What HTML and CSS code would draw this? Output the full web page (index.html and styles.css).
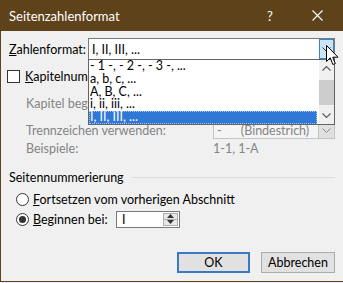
FILE: index.html
```html
<!DOCTYPE html>
<html lang="de">
<head>
    <meta charset="UTF-8">
    <title>Seitenzahlenformat</title>
    <link rel="stylesheet" href="styles.css">
</head>
<body>
    <div class="dialog">
        <div class="titlebar">
            <span class="title">Seitenzahlenformat</span>
            <span class="help">?</span>
            <span class="close">
                <svg width="11" height="11" viewBox="0 0 11 11"><path d="M0.5 0.5 L10.5 10.5 M10.5 0.5 L0.5 10.5" stroke="#fff" stroke-width="1.1" fill="none"/></svg>
            </span>
        </div>

        <div class="content">
            <div class="row row-format">
                <span class="label label-format"><u>Z</u>ahlenformat:</span>
                <div class="combo combo-format">
                    <span class="combo-value">I, II, III, ...</span>
                    <span class="combo-btn pressed">
                        <svg width="9" height="5" viewBox="0 0 9 5"><path d="M0.5 0.5 L4.5 4.5 L8.5 0.5" stroke="#333" fill="none"/></svg>
                    </span>
                </div>
            </div>

            <div class="row row-check">
                <span class="checkbox"></span>
                <span><u>K</u>apitelnummer einbeziehen</span>
            </div>

            <div class="row row-sub disabled">
                <span class="label label-sub">Kapitel beginnt mit Formatvorlage:</span>
                <span>Überschrift 1</span>
            </div>

            <div class="row row-sep disabled">
                <span class="label label-sub">Trennzeichen verwenden:</span>
                <div class="combo combo-sep">
                    <span class="combo-value">-&nbsp;&nbsp;&nbsp;&nbsp;&nbsp;&nbsp;(Bindestrich)</span>
                    <span class="combo-btn">
                        <svg width="9" height="5" viewBox="0 0 9 5"><path d="M0.5 0.5 L4.5 4.5 L8.5 0.5" stroke="#8a8a8a" fill="none"/></svg>
                    </span>
                </div>
            </div>

            <div class="row row-example disabled">
                <span class="label label-sub">Beispiele:</span>
                <span>1-1, 1-A</span>
            </div>

            <div class="row group-head">
                <span>Seitennummerierung</span>
                <span class="group-line"></span>
            </div>

            <div class="row row-radio">
                <span class="radio"></span>
                <span><u>F</u>ortsetzen vom vorherigen Abschnitt</span>
            </div>

            <div class="row row-radio row-start">
                <span class="radio checked"></span>
                <span class="label label-start"><u>B</u>eginnen bei:</span>
                <div class="spin">
                    <span class="spin-value">I</span>
                    <span class="spin-btns">
                        <span class="spin-btn"><svg width="7" height="4" viewBox="0 0 7 4"><path d="M0 4 L3.5 0 L7 4 Z" fill="#333"/></svg></span>
                        <span class="spin-btn"><svg width="7" height="4" viewBox="0 0 7 4"><path d="M0 0 L3.5 4 L7 0 Z" fill="#333"/></svg></span>
                    </span>
                </div>
            </div>

            <div class="buttons">
                <button class="btn btn-default">OK</button>
                <button class="btn">Abbrechen</button>
            </div>
        </div>

        <!-- open list of the Zahlenformat combo -->
        <div class="dropdown">
            <ul class="options">
                <li>- 1 -, - 2 -, - 3 -, ...</li>
                <li>a, b, c, ...</li>
                <li>A, B, C, ...</li>
                <li>i, ii, iii, ...</li>
                <li class="selected">I, II, III, ...</li>
            </ul>
            <div class="scrollbar">
                <span class="scroll-arrow">
                    <svg width="9" height="5" viewBox="0 0 9 5"><path d="M0.5 4.5 L4.5 0.5 L8.5 4.5" stroke="#606060" stroke-width="1.2" fill="none"/></svg>
                </span>
                <span class="scroll-thumb"></span>
                <span class="scroll-arrow">
                    <svg width="9" height="5" viewBox="0 0 9 5"><path d="M0.5 0.5 L4.5 4.5 L8.5 0.5" stroke="#606060" stroke-width="1.2" fill="none"/></svg>
                </span>
            </div>
        </div>

        <svg class="cursor" width="13" height="21" viewBox="0 0 13 21">
            <path d="M0.5 0.5 L0.5 16.5 L4.3 12.8 L6.8 19.5 L9.3 18.5 L6.8 12.2 L12 12.2 Z" fill="#fff" stroke="#000" stroke-width="1"/>
        </svg>
    </div>
</body>
</html>
```

FILE: styles.css
```css
html, body {
    margin: 0;
    padding: 0;
    background-color: #f0f0f0;
}

body {
    font-family: Lato, "Noto Sans", sans-serif;
    font-size: 12.5px;
    color: #000;
}

.dialog {
    position: relative;
    width: 342px;
    height: 281px;
    border-left: 1px solid #5e4219;
    border-bottom: 1px solid #5e4219;
    background-color: #f0f0f0;
}

.titlebar {
    display: flex;
    align-items: center;
    height: 31px;
    padding-left: 8px;
    background-color: #5e4219;
    color: #fff;
    font-size: 13px;
}

.title {
    flex: 1;
}

.help {
    width: 13px;
    margin-right: 32px;
    font-size: 13px;
}

.close {
    display: flex;
    width: 31px;
}

.content {
    padding: 0 8px;
}

.row {
    display: flex;
    align-items: center;
    height: 20px;
    white-space: nowrap;
}

.label {
    flex: none;
}

.disabled {
    color: #848484;
}

.row-format {
    height: 22px;
    margin-top: 7px;
}

.label-format {
    width: 79px;
}

.combo {
    display: flex;
    align-items: stretch;
    box-sizing: border-box;
    background-color: #fff;
    border: 1px solid #7a7a7a;
}

.combo-format {
    width: 247px;
    height: 22px;
}

.combo-value {
    flex: 1;
    display: flex;
    align-items: center;
    padding-left: 3px;
}

.combo-btn {
    display: flex;
    align-items: center;
    justify-content: center;
    width: 15px;
}

.combo-btn.pressed {
    background-color: #cce4f7;
    border: 1px solid #3c83cc;
    width: 13px;
}

.row-check {
    margin-top: 6px;
}

.checkbox {
    width: 13px;
    height: 13px;
    box-sizing: border-box;
    margin-left: -2px;
    margin-right: 5px;
    background-color: #fff;
    border: 1px solid #333;
}

.row-sub {
    margin-top: 7px;
    padding-left: 17px;
    gap: 6px;
}

.label-sub {
    min-width: 187px;
}

.row-sep {
    height: 18px;
    margin-top: 8px;
    padding-left: 17px;
}

.combo-sep {
    width: 123px;
    height: 17px;
    background-color: #f4f4f4;
    border-color: #c4c4c4;
}

.combo-sep .combo-btn {
    background-color: #e0e0e0;
    border-left: 1px solid #c4c4c4;
}

.row-example {
    height: 18px;
    padding-left: 17px;
}

.group-head {
    height: 18px;
    margin-top: 11px;
    gap: 8px;
}

.group-line {
    flex: 1;
    height: 1px;
    background-color: #dcdcdc;
}

.row-radio {
    height: 18px;
    margin-top: 4px;
    padding-left: 7px;
}

.row-start {
    margin-top: 2px;
}

.radio {
    position: relative;
    width: 13px;
    height: 13px;
    box-sizing: border-box;
    margin-right: 4px;
    border: 1px solid #333;
    border-radius: 50%;
    background-color: #fff;
}

.radio.checked::after {
    content: "";
    position: absolute;
    left: 2px;
    top: 2px;
    width: 7px;
    height: 7px;
    border-radius: 50%;
    background-color: #333;
}

.label-start {
    width: 83px;
}

.spin {
    display: flex;
    width: 64px;
    height: 17px;
    box-sizing: border-box;
    background-color: #fff;
    border: 1px solid #7a7a7a;
}

.spin-value {
    flex: 1;
    padding-left: 5px;
    line-height: 15px;
}

.spin-btns {
    display: flex;
    flex-direction: column;
    width: 15px;
    margin: 1px 1px 1px 0;
}

.spin-btn {
    flex: 1;
    display: flex;
    align-items: center;
    justify-content: center;
    background-color: #e8e8e8;
    border: 1px solid #adadad;
}

.spin-btn + .spin-btn {
    border-top: none;
}

.buttons {
    display: flex;
    justify-content: flex-end;
    gap: 11px;
    margin-top: 24px;
}

.btn {
    width: 74px;
    height: 21px;
    padding: 0;
    font-family: inherit;
    font-size: 12.5px;
    color: #000;
    background-color: #e1e1e1;
    border: 1px solid #adadad;
}

.btn-default {
    width: 73px;
    border: 2px solid #3b78c6;
}

/* list that hangs under the open combo */
.dropdown {
    position: absolute;
    left: 87px;
    top: 59px;
    width: 247px;
    height: 66px;
    box-sizing: border-box;
    display: flex;
    background-color: #fff;
    border: 1px solid #646464;
}

.options {
    flex: 1;
    margin: 0;
    padding: 0;
    list-style: none;
}

.options li {
    height: 12.8px;
    line-height: 12.8px;
    padding-left: 1px;
    white-space: nowrap;
}

.options li.selected {
    background-color: #2f78d6;
    color: #fff;
    outline: 1px dotted #a6c6ee;
    outline-offset: -1px;
}

.scrollbar {
    display: flex;
    flex-direction: column;
    width: 15px;
    margin-left: 2px;
    background-color: #f0f0f0;
}

.scroll-arrow {
    display: flex;
    align-items: center;
    justify-content: center;
    height: 17px;
}

.scroll-thumb {
    height: 25px;
    margin: 4px 0 3px;
    background-color: #cdcdcd;
}

.cursor {
    position: absolute;
    left: 325px;
    top: 45px;
}
```
